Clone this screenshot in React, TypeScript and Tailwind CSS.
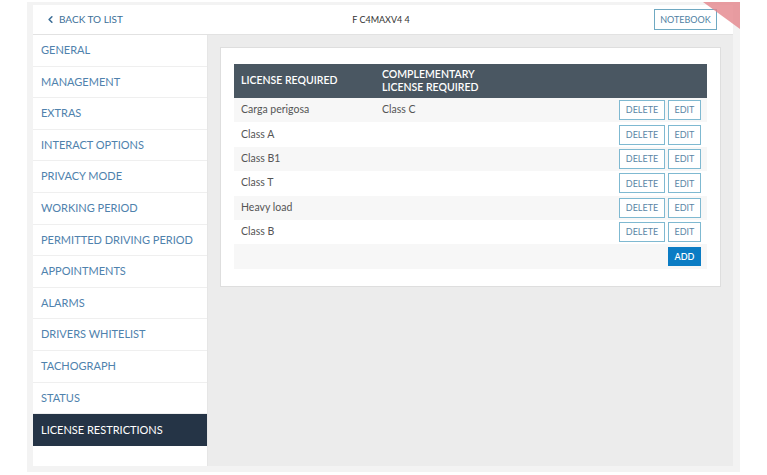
import { ChevronLeft } from 'lucide-react';

const menu = [
  'GENERAL',
  'MANAGEMENT',
  'EXTRAS',
  'INTERACT OPTIONS',
  'PRIVACY MODE',
  'WORKING PERIOD',
  'PERMITTED DRIVING PERIOD',
  'APPOINTMENTS',
  'ALARMS',
  'DRIVERS WHITELIST',
  'TACHOGRAPH',
  'STATUS',
  'LICENSE RESTRICTIONS',
];

const rows = [
  { license: 'Carga perigosa', extra: 'Class C' },
  { license: 'Class A', extra: '' },
  { license: 'Class B1', extra: '' },
  { license: 'Class T', extra: '' },
  { license: 'Heavy load', extra: '' },
  { license: 'Class B', extra: '' },
];

function OutlineButton({ label, width }: { label: string; width: string }) {
  return (
    <button
      className={`flex h-[20px] items-center justify-center border border-[#7fb9d1] bg-white text-[9px] text-[#5b86a6] ${width}`}
    >
      {label}
    </button>
  );
}

export default function App() {
  return (
    <div className="relative h-[475px] w-[767px] overflow-hidden bg-white font-['Lato','Liberation_Sans',sans-serif]">
      <div className="ml-[27px] mt-[2px] h-[470px] w-[713px] bg-[#f3f3f3] pl-[6px] pr-[7px] pt-[3px]">
        <div className="flex h-[461px] flex-col bg-white">
          {/* header */}
          <div className="flex h-[30px] shrink-0 items-center border-b border-[#e2e2e2] pl-[12px] pr-[16px]">
            <div className="flex w-[200px] items-center gap-[3px] text-[10px] text-[#3d6f98]">
              <ChevronLeft size={11} strokeWidth={3.5} />
              <span>BACK TO LIST</span>
            </div>
            <div className="flex-1 text-center text-[9px] text-[#333]">F C4MAXV4 4</div>
            <div className="flex w-[200px] justify-end">
              <button className="flex h-[21px] w-[63px] items-center justify-center border border-[#6fa9c2] text-[9px] text-[#4f7fa3]">
                NOTEBOOK
              </button>
            </div>
          </div>

          {/* body */}
          <div className="flex flex-1">
            <div className="flex w-[175px] shrink-0 flex-col border-r border-[#e6e6e6]">
              {menu.map((item, i) =>
                i === menu.length - 1 ? (
                  <div
                    key={item}
                    className="flex h-[31.6px] items-center bg-[#253446] px-[8px] text-[11px] text-white"
                  >
                    {item}
                  </div>
                ) : (
                  <div
                    key={item}
                    className="flex h-[31.6px] items-center border-b border-[#efefef] px-[8px] text-[11px] text-[#4f82ad]"
                  >
                    {item}
                  </div>
                ),
              )}
            </div>

            <div className="flex-1 bg-[#ececec] px-[12px] pt-[12px]">
              <div className="border border-[#dedede] bg-white px-[13px] pb-[17px] pt-[16px]">
                <div className="flex h-[34px] items-center bg-[#4a5762] text-[10.5px] font-semibold text-white">
                  <div className="w-[148px] pl-[7px]">LICENSE REQUIRED</div>
                  <div className="leading-[13px]">
                    COMPLEMENTARY
                    <br />
                    LICENSE REQUIRED
                  </div>
                </div>
                {rows.map((row, i) => (
                  <div
                    key={row.license}
                    className={`flex h-[24.4px] items-center text-[10.5px] text-[#555] ${
                      i % 2 === 0 ? 'bg-[#f7f7f7]' : 'bg-white'
                    }`}
                  >
                    <div className="w-[148px] pl-[7px]">{row.license}</div>
                    <div className="flex-1">{row.extra}</div>
                    <div className="flex gap-[3px] pr-[6px]">
                      <OutlineButton label="DELETE" width="w-[46px]" />
                      <OutlineButton label="EDIT" width="w-[33px]" />
                    </div>
                  </div>
                ))}
                <div className="flex h-[25px] items-center justify-end bg-[#f7f7f7] pr-[6px]">
                  <button className="flex h-[19px] w-[33px] items-center justify-center bg-[#0b7cc4] text-[9px] font-semibold text-white">
                    ADD
                  </button>
                </div>
              </div>
            </div>
          </div>
        </div>
      </div>

      {/* corner ribbon */}
      <div className="absolute left-[703px] top-[2px] h-0 w-0 border-l-[37px] border-t-[27px] border-l-transparent border-t-[#e3858b]/80" />
    </div>
  );
}
